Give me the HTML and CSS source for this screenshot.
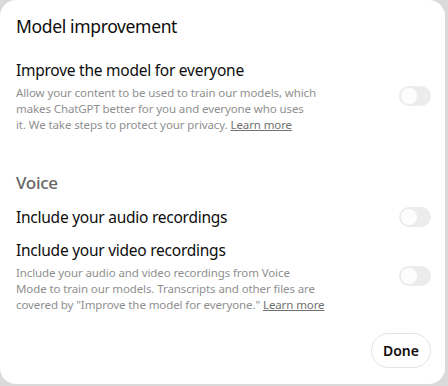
FILE: index.html
```html
<!DOCTYPE html>
<html lang="en">
<head>
<meta charset="utf-8">
<title>Data controls</title>
<link rel="stylesheet" href="styles.css">
</head>
<body>
<div class="dialog">
  <h2 class="heading">Model improvement</h2>
  <div class="row first">
    <div class="text">
      <div class="title">Improve the model for everyone</div>
      <p class="desc">Allow your content to be used to train our models, which<br>makes ChatGPT better for you and everyone who uses<br>it. We take steps to protect your privacy. <a href="#" class="link">Learn more</a></p>
    </div>
    <span class="toggle"><span class="knob"></span></span>
  </div>
  <h3 class="section">Voice</h3>
  <div class="row">
    <div class="text">
      <div class="title">Include your audio recordings</div>
    </div>
    <span class="toggle"><span class="knob"></span></span>
  </div>
  <div class="row video">
    <div class="text">
      <div class="title">Include your video recordings</div>
      <p class="desc">Include your audio and video recordings from Voice<br>Mode to train our models. Transcripts and other files are<br>covered by "Improve the model for everyone." <a href="#" class="link">Learn more</a></p>
    </div>
    <span class="toggle"><span class="knob"></span></span>
  </div>
  <div class="footer">
    <button class="done">Done</button>
  </div>
</div>
</body>
</html>
```
FILE: styles.css
```css
html, body {
  margin: 0;
  padding: 0;
}
body {
  width: 448px;
  height: 386px;
  background: #dadada;
  font-family: "Noto Sans", "Open Sans", sans-serif;
  color: #0d0d0d;
  overflow: hidden;
}
.dialog {
  box-sizing: border-box;
  width: 445px;
  height: 384px;
  background: #ffffff;
  border-radius: 16px;
  padding: 14px 14px 16px 16px;
  display: flex;
  flex-direction: column;
}
.heading {
  margin: 0;
  font-size: 17.5px;
  letter-spacing: -0.35px;
  line-height: 24px;
  font-weight: 400;
}
.row {
  display: flex;
  align-items: center;
  justify-content: space-between;
}
.row.first {
  margin-top: 20px;
}
.row.video {
  margin-top: 9px;
}
.text {
  width: 340px;
  white-space: nowrap;
}
.title {
  font-size: 15.5px;
  letter-spacing: -0.25px;
  line-height: 24px;
}
.desc {
  margin: 3px 0 0;
  font-size: 11.5px;
  letter-spacing: -0.1px;
  line-height: 16px;
  color: #8f8f8f;
}
.link {
  color: #707070;
  text-decoration: underline;
}
.section {
  margin: 38px 0 10px;
  font-size: 17px;
  letter-spacing: -0.3px;
  line-height: 24px;
  font-weight: 500;
  color: #666666;
}
.toggle {
  width: 32px;
  height: 20px;
  border-radius: 10px;
  background: #ececec;
  position: relative;
  flex-shrink: 0;
}
.knob {
  position: absolute;
  left: 2px;
  top: 2px;
  width: 16px;
  height: 16px;
  border-radius: 50%;
  background: #fdfdfd;
}
.footer {
  margin-top: auto;
  display: flex;
  justify-content: flex-end;
}
.done {
  height: 35px;
  width: 60px;
  border: 1px solid #e3e3e3;
  border-radius: 18px;
  background: #fff;
  font-family: inherit;
  font-size: 14px;
  font-weight: 600;
  color: #0d0d0d;
  padding: 0;
}
```
